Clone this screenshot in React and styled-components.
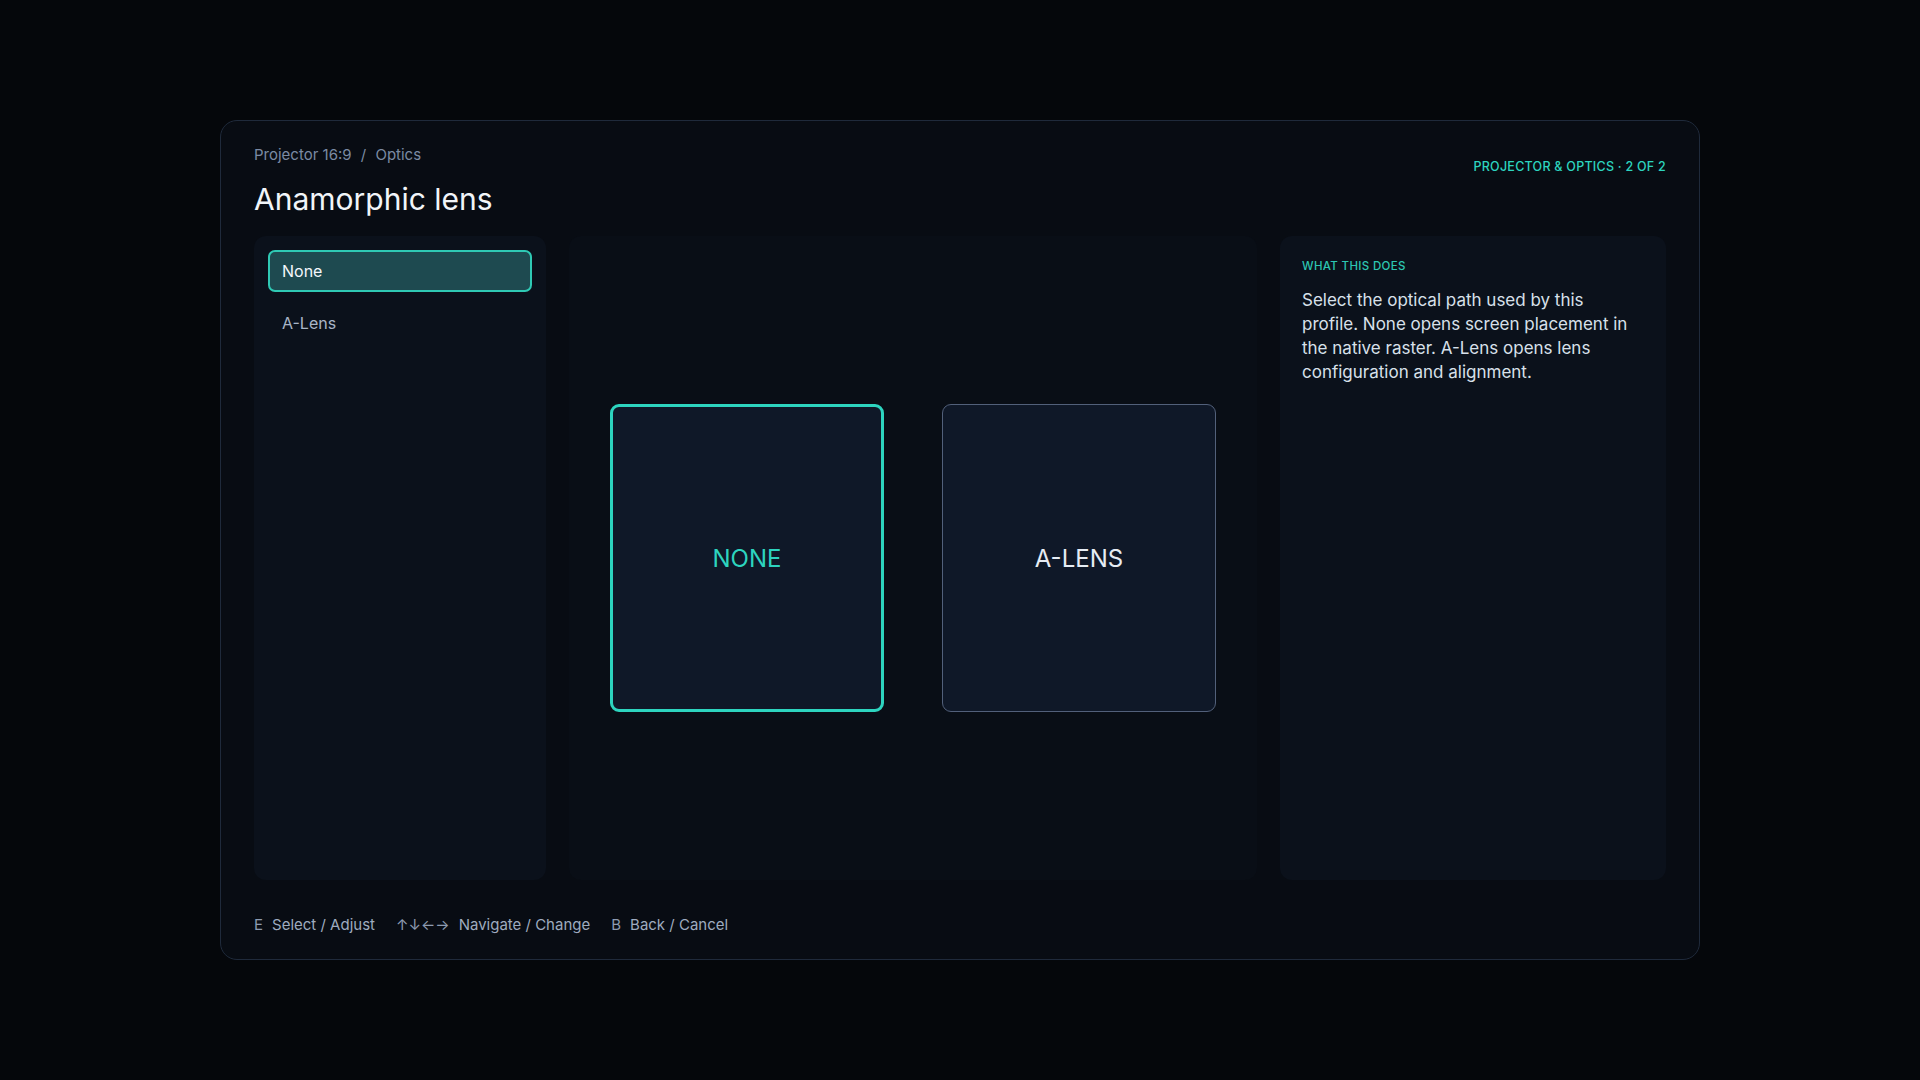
import React, { useState } from "react";
import styled, { createGlobalStyle } from "styled-components";

const GlobalStyle = createGlobalStyle`
  * { box-sizing: border-box; }
  html, body {
    margin: 0;
    padding: 0;
    background: #05070b;
    font-family: Inter, "Noto Sans", "Liberation Sans", sans-serif;
  }
`;

const options = [
  { id: "none", label: "None", tile: "NONE" },
  { id: "alens", label: "A-Lens", tile: "A-LENS" },
];

const hints = [
  { key: "E", label: "Select / Adjust" },
  { key: "↑↓←→", label: "Navigate / Change" },
  { key: "B", label: "Back / Cancel" },
];

const App = () => {
  const [selected, setSelected] = useState("none");

  return (
    <>
      <GlobalStyle />
      <Page>
        <Frame>
          <Header>
            <TitleBlock>
              <Breadcrumb>
                Projector 16:9 <Slash>/</Slash> Optics
              </Breadcrumb>
              <Title>Anamorphic lens</Title>
            </TitleBlock>
            <StepLabel>Projector &amp; Optics · 2 of 2</StepLabel>
          </Header>

          <Body>
            <ListPanel>
              {options.map((opt) => (
                <ListItem
                  key={opt.id}
                  $active={selected === opt.id}
                  onClick={() => setSelected(opt.id)}
                >
                  {opt.label}
                </ListItem>
              ))}
            </ListPanel>

            <PreviewPanel>
              {options.map((opt) => (
                <Tile
                  key={opt.id}
                  $active={selected === opt.id}
                  onClick={() => setSelected(opt.id)}
                >
                  {opt.tile}
                </Tile>
              ))}
            </PreviewPanel>

            <InfoPanel>
              <InfoHeading>What this does</InfoHeading>
              <InfoText>
                Select the optical path used by this profile. None opens screen
                placement in the native raster. A-Lens opens lens configuration
                and alignment.
              </InfoText>
            </InfoPanel>
          </Body>

          <Footer>
            {hints.map((h) => (
              <Hint key={h.key}>
                <HintKey>{h.key}</HintKey>
                <span>{h.label}</span>
              </Hint>
            ))}
          </Footer>
        </Frame>
      </Page>
    </>
  );
};

const Page = styled.div`
  width: 100vw;
  height: 100vh;
  display: flex;
  align-items: center;
  justify-content: center;
`;

const Frame = styled.div`
  width: 1480px;
  height: 840px;
  display: flex;
  flex-direction: column;
  padding: 24px 33px 24px 33px;
  background: #080c13;
  border: 1px solid #1f2a3b;
  border-radius: 17px;
`;

const Header = styled.div`
  display: flex;
  justify-content: space-between;
  align-items: flex-start;
`;

const TitleBlock = styled.div`
  display: flex;
  flex-direction: column;
  gap: 16px;
`;

const Breadcrumb = styled.div`
  font-size: 15px;
  line-height: 20px;
  color: #7b8aa3;
`;

const Slash = styled.span`
  margin: 0 5px;
`;

const Title = styled.h1`
  margin: 0;
  font-size: 30px;
  line-height: 36px;
  font-weight: 400;
  color: #f1f5f9;
`;

const StepLabel = styled.div`
  margin-top: 12px;
  font-size: 12.5px;
  line-height: 20px;
  font-weight: 500;
  letter-spacing: 0.02em;
  text-transform: uppercase;
  color: #2dd4bf;
`;

const Body = styled.div`
  flex: 1;
  margin-top: 19px;
  display: grid;
  grid-template-columns: 292px 1fr 386px;
  column-gap: 23px;
  min-height: 0;
`;

const ListPanel = styled.div`
  display: flex;
  flex-direction: column;
  gap: 10px;
  padding: 14px;
  background: #0b111b;
  border-radius: 12px;
`;

const ListItem = styled.div`
  height: 42px;
  display: flex;
  align-items: center;
  padding: 0 12px;
  border: 2px solid ${(p) => (p.$active ? "#2fc9b4" : "transparent")};
  border-radius: 7px;
  background: ${(p) => (p.$active ? "#1e4a50" : "transparent")};
  color: ${(p) => (p.$active ? "#f4f7fb" : "#a8b5c7")};
  font-size: 16px;
  cursor: pointer;
`;

const PreviewPanel = styled.div`
  display: flex;
  align-items: center;
  justify-content: center;
  gap: 58px;
  background: #090e16;
  border-radius: 12px;
`;

const Tile = styled.div`
  width: 274px;
  height: 308px;
  display: flex;
  align-items: center;
  justify-content: center;
  background: #0f1828;
  border: ${(p) => (p.$active ? "3px solid #2dd4bf" : "1.5px solid #52607a")};
  border-radius: 9px;
  color: ${(p) => (p.$active ? "#2dd4bf" : "#e6ecf4")};
  font-size: 24px;
  font-weight: 400;
  cursor: pointer;
`;

const InfoPanel = styled.div`
  padding: 22px 22px;
  background: #0b111b;
  border-radius: 12px;
`;

const InfoHeading = styled.div`
  font-size: 11.5px;
  line-height: 16px;
  font-weight: 500;
  letter-spacing: 0.03em;
  text-transform: uppercase;
  color: #2dc6b2;
`;

const InfoText = styled.p`
  margin: 14px 0 0;
  font-size: 17px;
  line-height: 24px;
  color: #d8e0ea;
`;

const Footer = styled.div`
  margin-top: 35px;
  display: flex;
  align-items: center;
  gap: 21px;
  font-size: 15px;
  line-height: 20px;
  color: #9eabbf;
`;

const Hint = styled.div`
  display: flex;
  align-items: center;
  gap: 9px;
`;

const HintKey = styled.span`
  color: #8d9bb1;
`;

export default App;
